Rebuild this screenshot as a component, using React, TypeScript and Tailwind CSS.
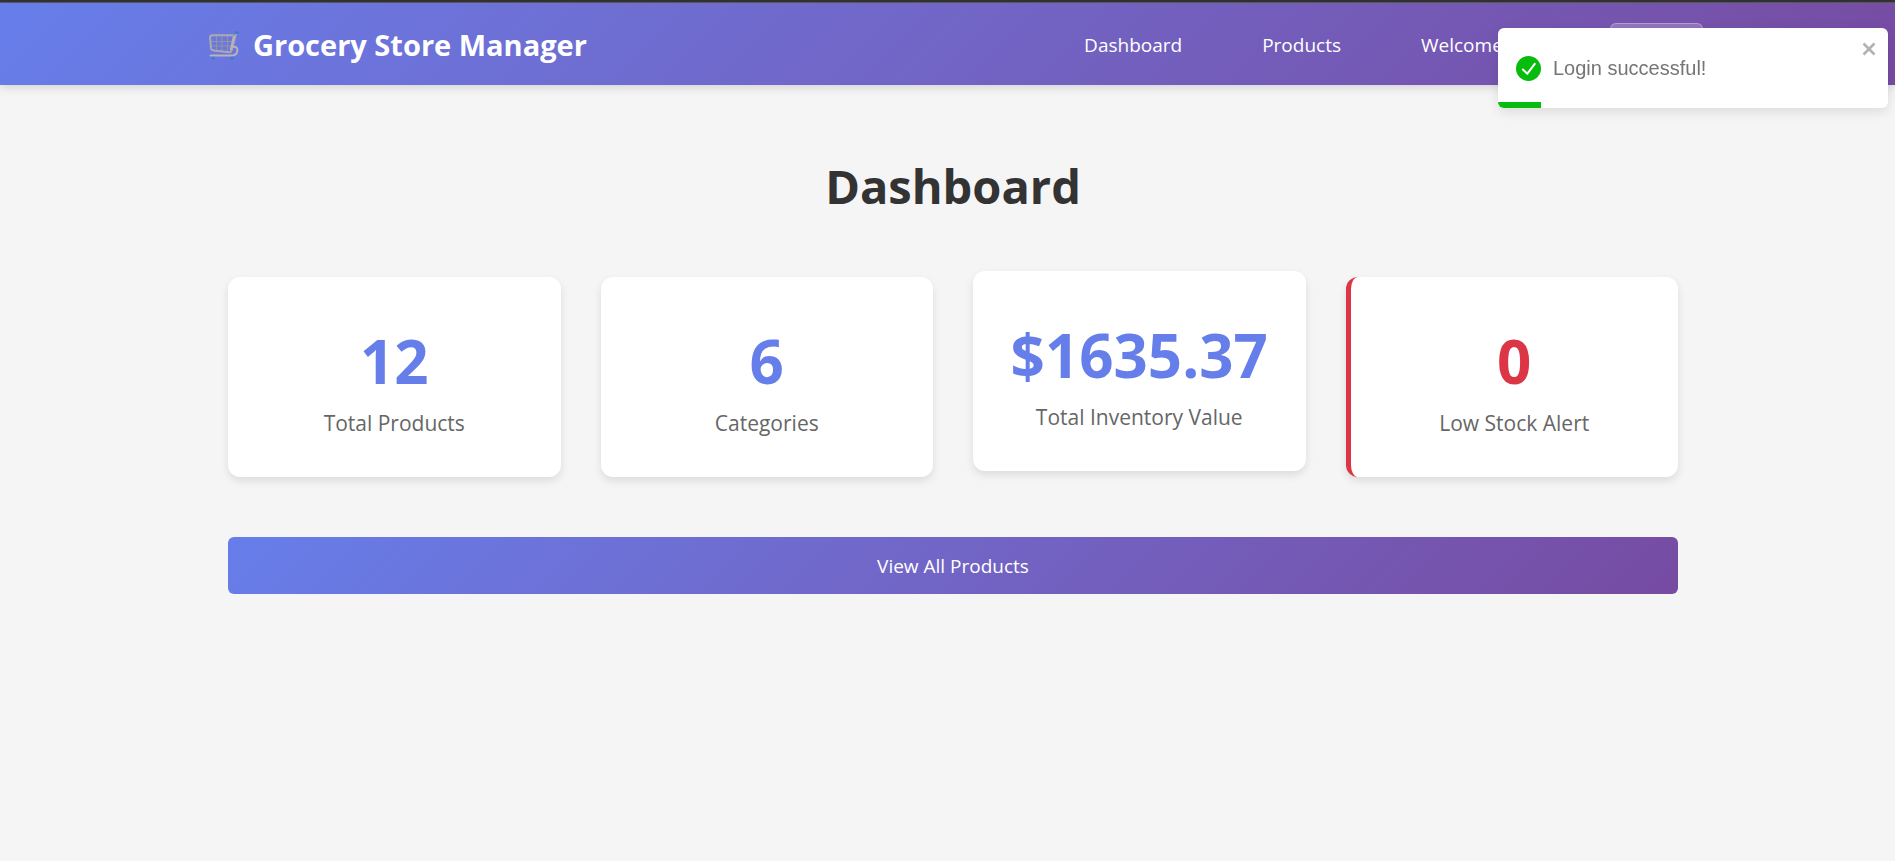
type Stat = {
  value: string;
  label: string;
  variant?: "raised" | "alert";
};

const stats: Stat[] = [
  { value: "12", label: "Total Products" },
  { value: "6", label: "Categories" },
  { value: "$1635.37", label: "Total Inventory Value", variant: "raised" },
  { value: "0", label: "Low Stock Alert", variant: "alert" },
];

function CartIcon() {
  return (
    <svg viewBox="0 0 30 30" className="size-[30px]" fill="none" aria-hidden="true">
      <g stroke="#9492a4" strokeWidth="1.200">
        <path d="M7.500 6v15M13 6v15M18.500 6v15M1.500 11.500h24M2 16h22.500" />
      </g>
      <path
        d="M24.500 5.200H3.500Q.9 5.200 1.100 8L2 18.200Q2.300 20.300 4.500 20.500L20 22.200Q22 22.300 22.600 20.200L27 3.500"
        stroke="#aeaaab"
        strokeWidth="2"
        strokeLinejoin="round"
      />
      <path d="m25 6-3.200 14" stroke="#b7b2b0" strokeWidth="2.200" />
      <path
        d="M24 17c3.500-.8 5 1.400 4.300 4.300-.7 3-2.600 4.200-5 4.200H1.500"
        stroke="#b9b3bb"
        strokeWidth="1.900"
        strokeLinecap="round"
      />
      <rect x="25.500" y="1.300" width="4.500" height="2.600" rx="1.300" fill="#3f7cc0" />
      <circle cx="4.200" cy="28.200" r="1.600" fill="#3f7cc0" />
      <circle cx="23" cy="28.200" r="1.600" fill="#3f7cc0" />
    </svg>
  );
}

function Header() {
  return (
    <header className="bg-linear-135 from-[#667eea] to-[#764ba2] pl-[11px] text-white shadow-[0_2px_10px_rgba(0,0,0,0.15)]">
      <div className="mx-auto flex max-w-[1500px] items-center justify-between py-5">
        <a href="#home" className="flex items-center gap-3.5 pt-0.5 pl-1.5 text-[29px] leading-10 font-bold">
          <CartIcon />
          Grocery Store Manager
        </a>
        <nav className="flex items-center gap-20 text-[19px] leading-10">
          <a href="#dashboard" className="pt-0.5">Dashboard</a>
          <a href="#products" className="pt-0.5">Products</a>
          <span className="w-[109px] pt-0.5">Welcome</span>
          <button
            type="button"
            className="h-[42px] w-[93px] rounded-md border border-white/30 bg-white/20"
          >
            Logout
          </button>
        </nav>
      </div>
    </header>
  );
}

function StatCard({ value, label, variant }: Stat) {
  return (
    <div
      className={
        "rounded-xl bg-white pt-[42px] pb-[38px] text-center shadow-[0_4px_8px_rgba(0,0,0,0.1)]" +
        (variant === "raised" ? " -translate-y-1.5" : "") +
        (variant === "alert" ? " border-l-[5px] border-[#dc3545]" : "")
      }
    >
      <p
        className={
          "text-[60px] leading-[84px] font-bold " +
          (variant === "alert" ? "text-[#dc3545]" : "text-[#667eea]")
        }
      >
        {value}
      </p>
      <p className="pt-1 text-[21px] leading-8 text-[#666]">{label}</p>
    </div>
  );
}

function Toast() {
  return (
    <div
      role="status"
      className="fixed top-7 right-[7px] flex h-20 w-[390px] items-center gap-3 overflow-hidden rounded-md bg-white pl-[18px] font-['Liberation_Sans',sans-serif] text-[20px] text-[#757575] shadow-[0_4px_12px_rgba(0,0,0,0.1)]"
    >
      <svg viewBox="0 0 24 24" className="size-[25px]" aria-hidden="true">
        <circle cx="12" cy="12" r="12" fill="#07bc0c" />
        <path
          d="m6.600 13 4.300 4L18 7.500"
          fill="none"
          stroke="#fff"
          strokeWidth="1.900"
          strokeLinecap="round"
          strokeLinejoin="round"
        />
      </svg>
      Login successful!
      <button type="button" aria-label="Close" className="absolute top-3.5 right-3 text-[#b2b2b2]">
        <svg viewBox="0 0 14 14" className="size-[14px]" aria-hidden="true">
          <path d="M1.500 1.500 12.500 12.500M12.500 1.500 1.500 12.500" stroke="currentColor" strokeWidth="2.600" />
        </svg>
      </button>
      <div className="absolute bottom-0 left-0 h-1.5 w-[43px] bg-[#07bc0c]" />
    </div>
  );
}

export default function App() {
  return (
    <div className="min-h-screen bg-[#f5f5f5] font-['Open_Sans',sans-serif]">
      <div className="h-[3px] border-b border-[#5c5c5c] bg-[#333]" />
      <Header />
      <main className="pl-[11px]">
        <div className="mx-auto max-w-[1500px] px-[25px] pt-[65px]">
          <h1 className="text-center text-[47px] leading-[72px] font-bold text-[#333]">Dashboard</h1>
          <div className="mt-[55px] grid grid-cols-4 gap-10">
            {stats.map((stat) => (
              <StatCard key={stat.label} {...stat} />
            ))}
          </div>
          <a
            href="#products"
            className="mt-[60px] block rounded-md bg-linear-135 from-[#667eea] to-[#764ba2] pt-0.5 text-center text-[19px] leading-[55px] text-white"
          >
            View All Products
          </a>
        </div>
      </main>
      <Toast />
    </div>
  );
}
